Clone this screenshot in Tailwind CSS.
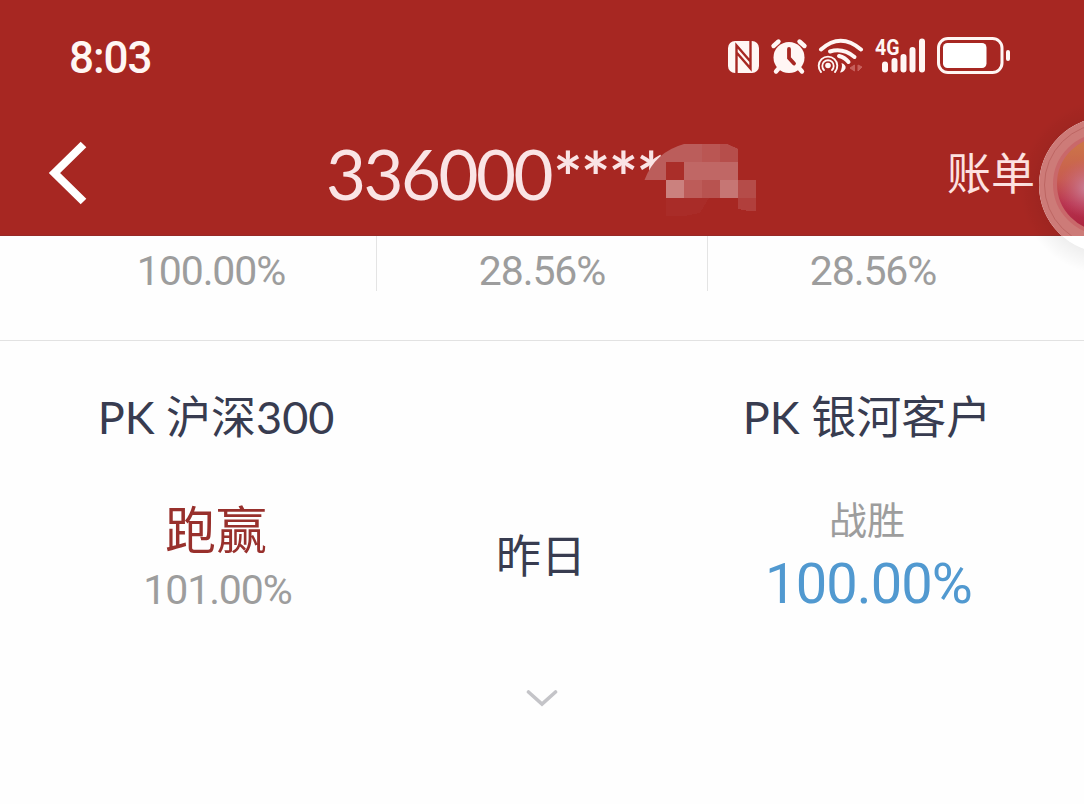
<!DOCTYPE html>
<html lang="zh-CN">
<head>
  <meta charset="UTF-8" />
  <title>账单</title>
  <script src="https://cdn.jsdelivr.net/npm/@tailwindcss/browser@4"></script>
</head>
<body class="bg-[#fefefe]">
<div class="relative w-[1084px] h-[804px] overflow-hidden font-[Lato,'Noto_Sans_CJK_SC',sans-serif]">

  <header class="h-[236px] bg-[#a72722] text-white border-b border-[#962a27]">
    <!-- Status bar -->
    <div class="h-[112px] pl-[69px] pr-[73px] flex items-center justify-between">
      <span class="text-[44px] leading-none font-medium tracking-[-1px] text-[#fff6f4] font-[Roboto,sans-serif] pt-1">8:03</span>
      <svg class="w-[284px] h-[40px]" viewBox="727 36 284 40" fill="none">
        <!-- NFC -->
        <rect x="728" y="41" width="31" height="32" rx="7" fill="#fff6f4" />
        <path d="M736.500 73V45.500L750 61M750.500 41V68.500L737 53" stroke="#a72722" stroke-width="2.400" />
        <!-- Alarm -->
        <circle cx="789" cy="57.500" r="15.500" fill="#fff6f4" />
        <path d="M773.500 46L778.500 41.500M799.500 41.500L804.500 46M779 68L776 71.500M799 68L802 71.500" stroke="#fff6f4" stroke-width="4.400" stroke-linecap="round" />
        <path d="M789 49V58L794 63.500" stroke="#a72722" stroke-width="3.800" stroke-linecap="round" />
        <!-- Wi-Fi with hotspot -->
        <path d="M821 49.500Q840.500 32 861 49.500" stroke="#fff6f4" stroke-width="4" stroke-linecap="round" />
        <path d="M830 51.500Q843 47.500 854.500 57" stroke="#fff6f4" stroke-width="4" stroke-linecap="round" />
        <path d="M839 56Q845 57.500 848.500 62" stroke="#fff6f4" stroke-width="4" stroke-linecap="round" />
        <path d="M840 72.500Q843 67 841.500 63Q846.500 65 845.500 68.500Q843.500 72.500 840 72.500Z" fill="#fff6f4" />
        <circle cx="828" cy="65.500" r="2.800" fill="#fff6f4" />
        <path d="M824 70A5.700 5.700 0 1 1 832 70" stroke="#fff6f4" stroke-width="1.800" stroke-linecap="round" />
        <path d="M821 72A9.300 9.300 0 1 1 835 72" stroke="#fff6f4" stroke-width="1.900" stroke-linecap="round" />
        <path d="M854.500 65V71L850 68ZM858 65V71L862 67Z" fill="#c65f5b" stroke="#c65f5b" />
        <!-- Signal -->
        <text x="875" y="54.500" font-family="Roboto" font-size="22" font-weight="700" textLength="24.500" lengthAdjust="spacingAndGlyphs" fill="#fff6f4">4G</text>
        <path d="M885 64.500V69.500M894.500 61V69.500M903.500 57V69.500M912.500 50V69.500M922 41.500V69.500" stroke="#fff6f4" stroke-width="6" stroke-linecap="round" />
        <!-- Battery -->
        <rect x="938.500" y="38.500" width="63.500" height="34" rx="9.500" stroke="#fff6f4" stroke-width="3" />
        <rect x="943" y="43" width="43.500" height="25" rx="4.500" fill="#fff" />
        <path d="M1008 52V59" stroke="#fff6f4" stroke-width="4" stroke-linecap="round" />
      </svg>
    </div>

    <!-- Title bar -->
    <div class="h-[122px] pl-[48px] pr-[49px] flex items-center">
      <svg class="w-[40px] h-[64px]" viewBox="48 141 40 64" fill="none">
        <path d="M83.500 144.500L54.500 173L83.500 201.500" stroke="#fff" stroke-width="8" />
      </svg>
      <h1 class="relative ml-[238px] w-[440px] h-[69px] text-[69px] leading-none text-[#fae4e5] whitespace-nowrap flex">
        <span class="tracking-[-2.5px]">336000</span><span class="pt-[3px] pl-[2px] font-bold tracking-[-1.5px]">****</span>
        <svg class="absolute left-[314px] top-[1px] w-[120px] h-[80px]" viewBox="640 140 120 80">
          <path d="M644.500 180Q655 152 684 144H727L738 149V180Z" fill="#bb5d5b" />
          <g shape-rendering="crispEdges">
            <path d="M684 162H738V180H684Z" fill="#c06765" />
            <path d="M702 144H720V162H702Z" fill="#ba5653" />
            <path d="M720 144H727L738 149V162H720Z" fill="#b64e4b" />
            <path d="M666 162H684V180H666Z" fill="#aa2e29" />
            <path d="M666 180H684V198H666Z" fill="#cb817e" />
            <path d="M684 180H702V198H684Z" fill="#bd5c59" />
            <path d="M702 180H720V198H702Z" fill="#b85350" />
            <path d="M720 180H738V198H720Z" fill="#c67674" />
            <path d="M738 180H756V198H738Z" fill="#b54c49" />
            <path d="M738 198H756V211H749L738 209Z" fill="#b13f3c" />
            <path d="M666 198H709L700 213L684 216H666Z" fill="#a92c28" />
          </g>
        </svg>
      </h1>
      <a href="#" class="ml-auto text-[44px] leading-none text-[#fde2e0]">账单</a>
    </div>
  </header>

  <main>
    <!-- Return rates -->
    <section class="h-[105px] border-b border-[#e2e2e2] px-[46px] grid grid-cols-[331px_331px_1fr] text-[41px] leading-[70px] text-[#9d9d9d] text-center tracking-[-1.1px] font-[Roboto,sans-serif]">
      <div class="h-[55px] border-r border-[#e4e4e4]">100.00%</div>
      <div class="h-[55px] border-r border-[#e4e4e4]">28.56%</div>
      <div class="h-[55px]">28.56%</div>
    </section>

    <!-- PK comparison -->
    <section class="pl-[66px] pr-[64px] pt-[46px] grid grid-cols-[300px_1fr_306px] text-center">
      <div>
        <h2 class="text-[45px] leading-[60px] text-[#383c50]">PK 沪深300</h2>
        <p class="mt-[53px] text-[51px] leading-[60px] text-[#98302c]">跑赢</p>
        <p class="pl-[3px] text-[41px] leading-[60px] tracking-[-1.1px] text-[#9d9d9d] font-[Roboto,sans-serif]">101.00%</p>
      </div>
      <p class="pt-[139px] pl-[2px] text-[45px] leading-[60px] text-[#383c50]">昨日</p>
      <div>
        <h2 class="text-[45px] leading-[60px] text-[#383c50] whitespace-nowrap">PK 银河客户</h2>
        <p class="mt-[42px] text-[38px] leading-[60px] text-[#9d9d9d]">战胜</p>
        <p class="pl-[3px] text-[56px] leading-[70px] tracking-[-0.9px] text-[#5199d0] font-[Roboto,sans-serif]">100.00%</p>
      </div>
    </section>

    <svg class="mx-auto mt-[69px] w-[32px] h-[18px]" viewBox="0 0 32 18" fill="none">
      <path d="M2.500 3L16 15L29.500 3" stroke="#c4c4c8" stroke-width="3.600" stroke-linecap="round" />
    </svg>
  </main>

  <!-- Floating assistant button -->
  <div class="absolute right-0 top-[90px] w-[80px] h-[200px] overflow-hidden">
    <svg class="w-[80px] h-[200px]" viewBox="1004 90 80 200" fill="none">
      <defs>
        <linearGradient id="orb" x1="0" y1="0" x2="0" y2="1">
          <stop offset="0.1" stop-color="#cc7448" />
          <stop offset="0.45" stop-color="#c85c50" />
          <stop offset="0.7" stop-color="#b93450" />
          <stop offset="1" stop-color="#a8203a" />
        </linearGradient>
        <radialGradient id="glow">
          <stop offset="0" stop-color="#c9849c" />
          <stop offset="1" stop-color="#c9607c" stop-opacity="0" />
        </radialGradient>
        <radialGradient id="halo">
          <stop offset="0.75" stop-color="#000" stop-opacity="0.06" />
          <stop offset="1" stop-color="#000" stop-opacity="0" />
        </radialGradient>
        <clipPath id="overHeader">
          <rect x="1004" y="90" width="80" height="146" />
        </clipPath>
      </defs>
      <circle cx="1107" cy="187" r="88" fill="url(#halo)" />
      <circle cx="1107" cy="185" r="68" fill="#fff" />
      <g clip-path="url(#overHeader)">
        <circle cx="1107" cy="185" r="68" fill="#cd7b78" />
        <circle cx="1106" cy="185" r="61.500" stroke="#bd6663" stroke-width="1" />
      </g>
      <circle cx="1104" cy="184" r="49" fill="url(#orb)" stroke="#c9686a" stroke-width="4" />
      <circle cx="1088" cy="188" r="30" fill="url(#glow)" />
    </svg>
  </div>

</div>
</body>
</html>
